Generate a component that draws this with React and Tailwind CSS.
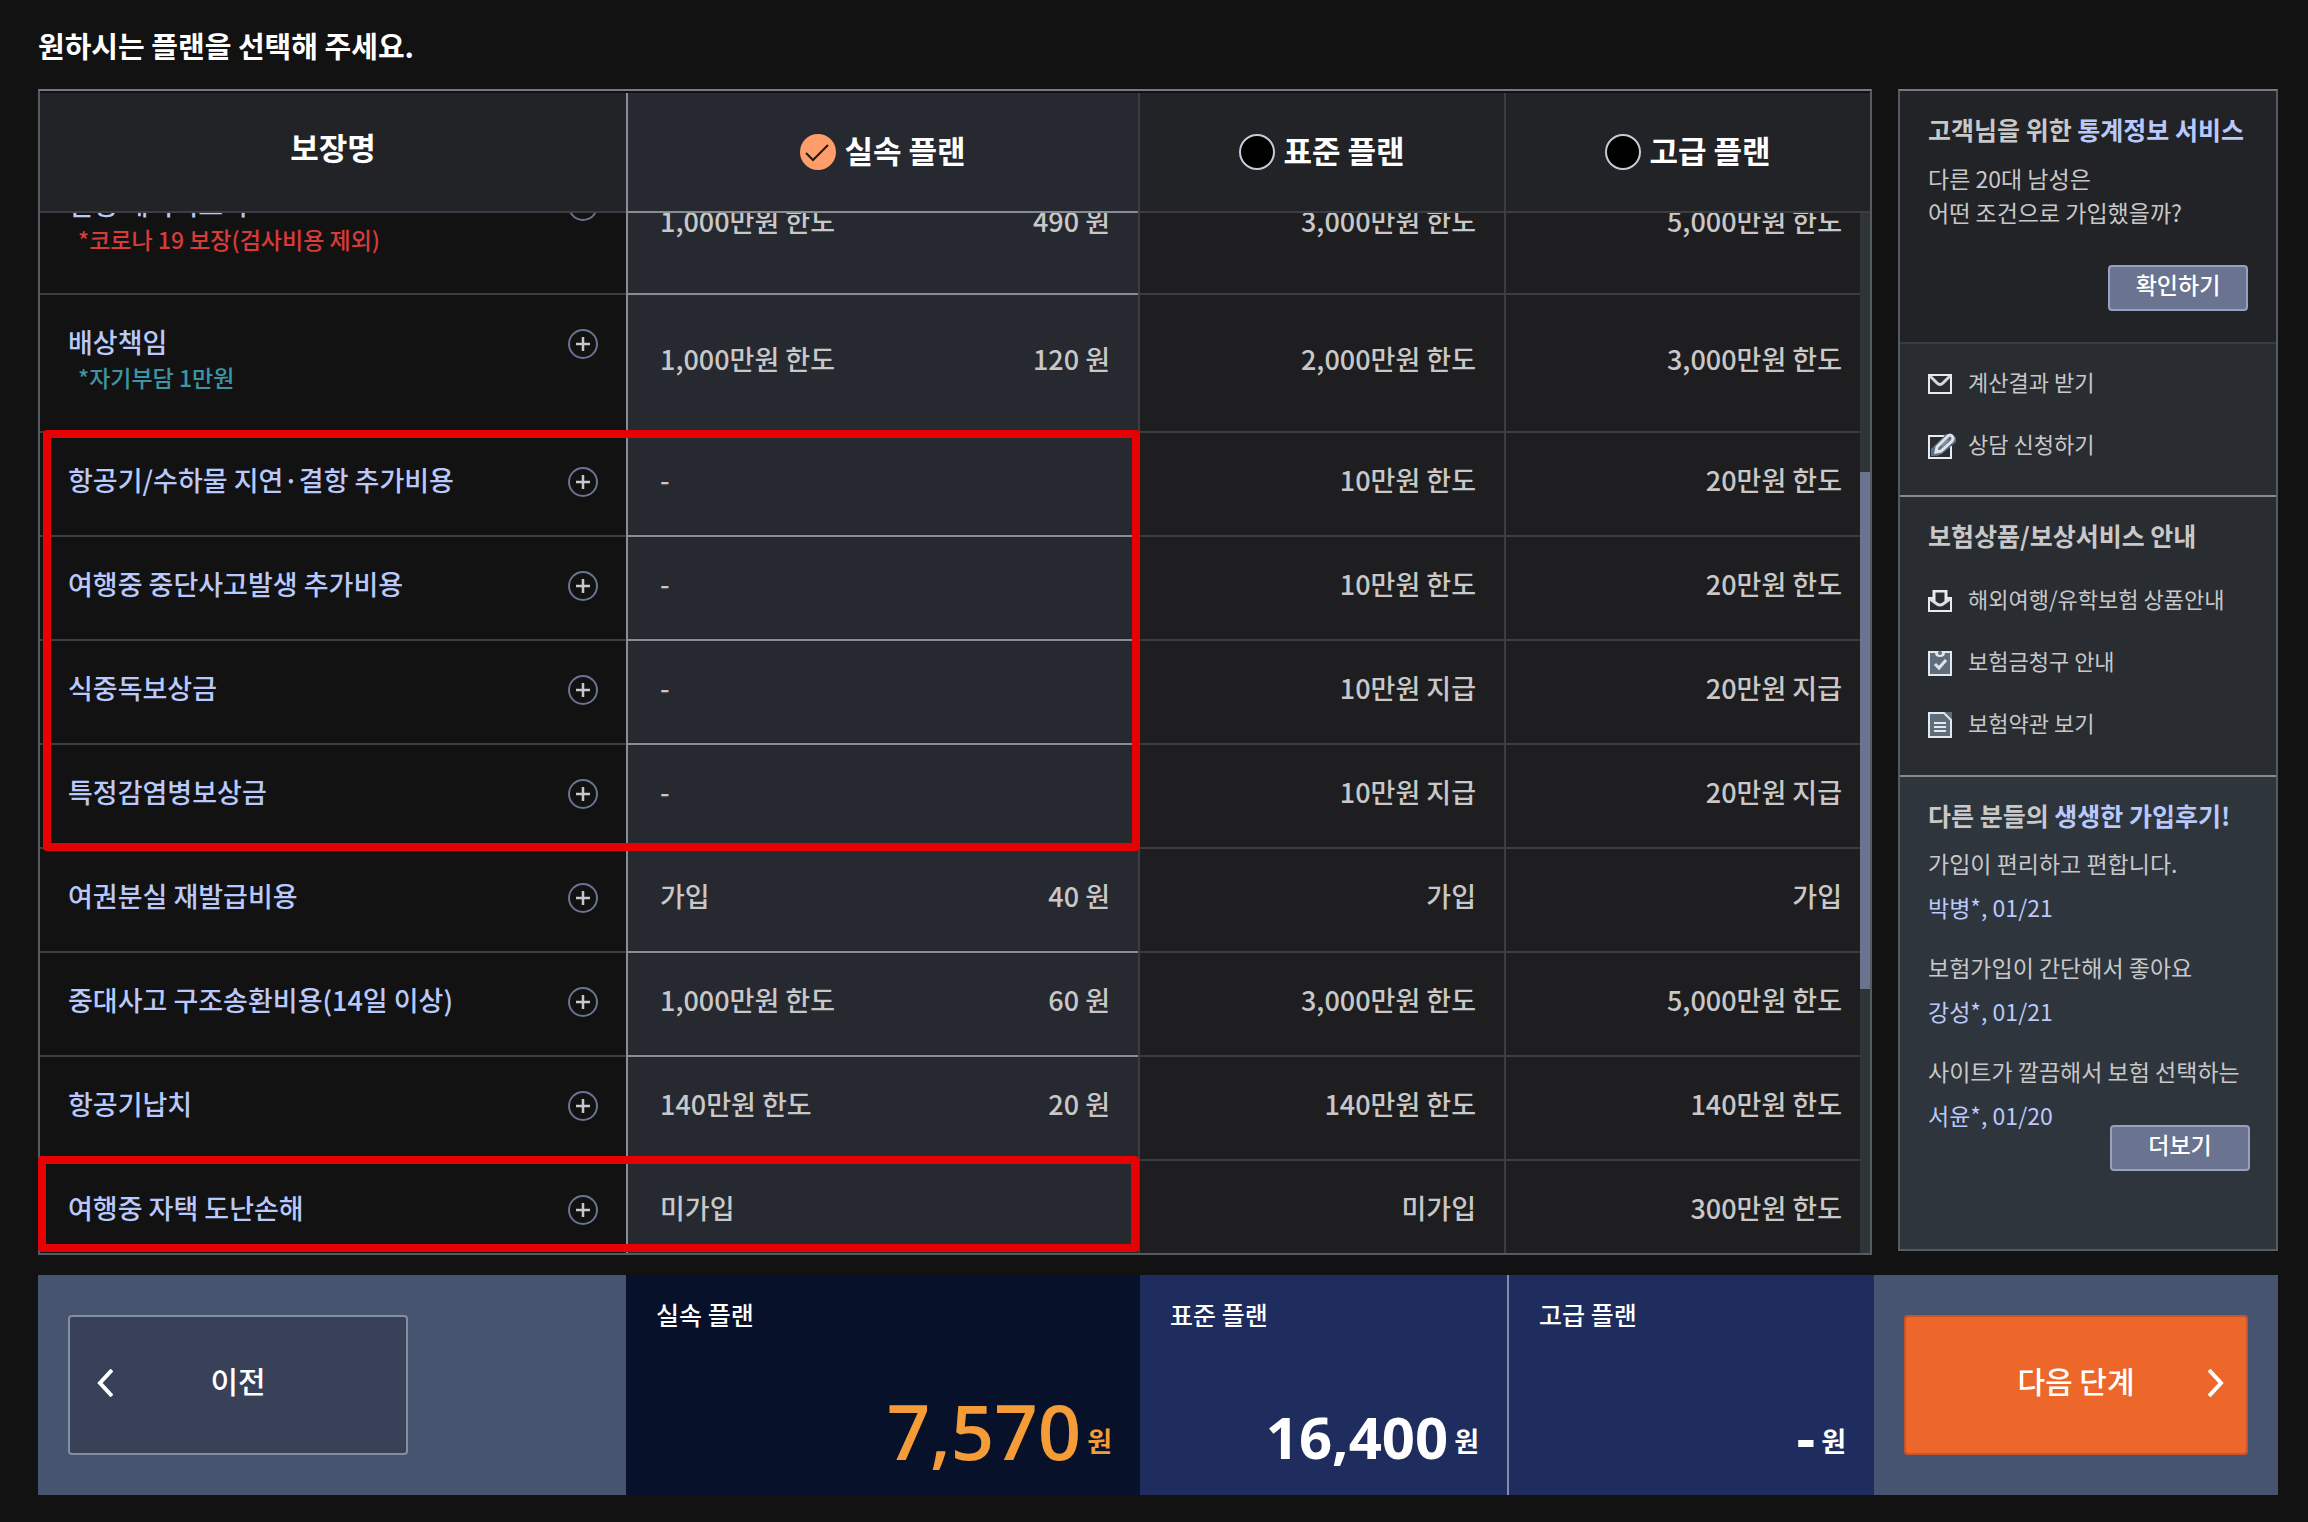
import React, { useLayoutEffect, useRef, useState } from "react";

const plans = [
  { id: "basic", name: "실속 플랜" },
  { id: "standard", name: "표준 플랜" },
  { id: "premium", name: "고급 플랜" },
];

const coverages = [
  {
    name: "질병 해외의료비",
    note: "*코로나 19 보장(검사비용 제외)",
    noteColor: "text-[#d93a3a]",
    basic: "1,000만원 한도",
    price: "490 원",
    standard: "3,000만원 한도",
    premium: "5,000만원 한도",
  },
  {
    name: "배상책임",
    note: "*자기부담 1만원",
    noteColor: "text-[#3f94a3]",
    basic: "1,000만원 한도",
    price: "120 원",
    standard: "2,000만원 한도",
    premium: "3,000만원 한도",
  },
  { name: "항공기/수하물 지연·결항 추가비용", basic: "-", standard: "10만원 한도", premium: "20만원 한도" },
  { name: "여행중 중단사고발생 추가비용", basic: "-", standard: "10만원 한도", premium: "20만원 한도" },
  { name: "식중독보상금", basic: "-", standard: "10만원 지급", premium: "20만원 지급" },
  { name: "특정감염병보상금", basic: "-", standard: "10만원 지급", premium: "20만원 지급" },
  { name: "여권분실 재발급비용", basic: "가입", price: "40 원", standard: "가입", premium: "가입" },
  {
    name: "중대사고 구조송환비용(14일 이상)",
    basic: "1,000만원 한도",
    price: "60 원",
    standard: "3,000만원 한도",
    premium: "5,000만원 한도",
  },
  { name: "항공기납치", basic: "140만원 한도", price: "20 원", standard: "140만원 한도", premium: "140만원 한도" },
  { name: "여행중 자택 도난손해", basic: "미가입", standard: "미가입", premium: "300만원 한도" },
];

const reviews = [
  { text: "가입이 편리하고 편합니다.", author: "박병*, 01/21" },
  { text: "보험가입이 간단해서 좋아요", author: "강성*, 01/21" },
  { text: "사이트가 깔끔해서 보험 선택하는", author: "서윤*, 01/20" },
];

const MailIcon = () => (
  <svg width="24" height="20" viewBox="0 0 24 20" fill="none">
    <path d="M1 1h22v18H1z" stroke="#e9ebf2" strokeWidth="2" />
    <path d="M2 2l7 7q3 3 6 0l7-7" stroke="#d5d8de" strokeWidth="3" />
  </svg>
);

const EditIcon = () => (
  <svg width="28" height="26" viewBox="0 0 28 26" fill="none">
    <path d="M17 3H1v22h22V13" stroke="#e9ebf2" strokeWidth="2" />
    <path d="M3 23V16L18 1h6l4 4v4L14 21l-5 2z" fill="#5f7080" />
    <path d="M9 14L20 3q2-2 4 0t0 5L13 18l-5 1z" stroke="#dfe3ea" strokeWidth="3" />
    <path d="M14 13l6-6" stroke="#8794a2" strokeWidth="2" />
  </svg>
);

const InboxIcon = () => (
  <svg width="24" height="22" viewBox="0 0 24 22" fill="none">
    <path d="M5 8H1v13h22V8h-4" stroke="#e9ebf2" strokeWidth="2" />
    <path d="M6 11V1h12v10" stroke="#e9ebf2" strokeWidth="3" />
    <path d="M2 9l7 5q3 2 6 0l7-5" stroke="#dcdfe6" strokeWidth="3" />
  </svg>
);

const ClaimIcon = () => (
  <svg width="24" height="26" viewBox="0 0 24 26" fill="none">
    <rect x="1" y="2" width="22" height="23" fill="#5f6d7a" stroke="#e3e7ee" strokeWidth="2" />
    <path d="M7 1v2q0 4 5 4t5-4V1z" fill="#dfe3ea" />
    <circle cx="12" cy="3" r="2" fill="#5f6d7a" />
    <path d="M7 14l4 4 7-8" stroke="#dfe3ea" strokeWidth="3" />
  </svg>
);

const DocIcon = () => (
  <svg width="24" height="26" viewBox="0 0 24 26" fill="none">
    <path d="M16 0h8v8z" fill="#5f6d7a" />
    <path d="M1 1h15l7 7v17H1z" fill="#5f6d7a" stroke="#e3e7ee" strokeWidth="2" />
    <path d="M6 11h12M6 15h12M6 19h12" stroke="#e3e7ee" strokeWidth="2" />
  </svg>
);

const PlusButton = ({ label }) => (
  <button type="button" aria-label={label} className="shrink-0">
    <svg width="30" height="30" viewBox="0 0 30 30" fill="none">
      <circle cx="15" cy="15" r="14" stroke="#6a7390" strokeWidth="2" />
      <path d="M8 15h14M15 8v14" stroke="#c8c8cc" strokeWidth="2.5" />
    </svg>
  </button>
);

const PlanRadio = ({ plan, checked, onChange }) => (
  <label className="flex items-center justify-center gap-2 cursor-pointer">
    <input
      type="radio"
      name="plan"
      value={plan.id}
      checked={checked}
      onChange={onChange}
      className="peer sr-only"
    />
    <svg width="36" height="36" viewBox="0 0 36 36" fill="none">
      {checked ? (
        <>
          <circle cx="18" cy="18" r="18" fill="#ff9d6b" />
          <path d="M6 19l7 7 15-15" stroke="#1c1a12" strokeWidth="2" />
        </>
      ) : (
        <circle cx="18" cy="18" r="17" fill="#000" stroke="#c3ccd6" strokeWidth="2" />
      )}
    </svg>
    <span className="pb-1">{plan.name}</span>
  </label>
);

const SideLink = ({ icon, children }) => (
  <li>
    <a href="#" className="flex items-center h-[62px] text-[22px] text-[#c8c8c8]">
      <span className="w-[40px] pt-1.5">{icon}</span>
      {children}
    </a>
  </li>
);

const PriceBox = ({ name, price, className, priceClass, priceColor }) => (
  <div className={`flex flex-col justify-between pl-[30px] pr-7 py-6 ${className}`}>
    <p className="text-[25px] leading-[30px] font-medium">{name}</p>
    <p className={`flex items-end justify-end gap-1.5 ${priceColor}`}>
      <span className={`font-['Open_Sans',sans-serif] ${priceClass}`}>{price}</span>
      <span className="mb-4 text-[27px] leading-[28px] font-bold">원</span>
    </p>
  </div>
);

const CoverageTable = () => {
  const [plan, setPlan] = useState("basic");
  const bodyRef = useRef(null);

  useLayoutEffect(() => {
    bodyRef.current.scrollTop = 56;
  }, []);

  return (
    <div className="relative flex-1 min-w-0 border-2 border-[#565b60] border-t-[#78788c] pt-0.5">
      <div ref={bodyRef} className="h-full overflow-y-auto [scrollbar-width:none]">
        <table className="w-full table-fixed border-separate border-spacing-0 text-[27px] leading-[38px] font-medium text-[#c8c8c8]">
          <thead className="text-[31px] leading-[44px] font-bold text-white">
            <tr>
              <th className="sticky top-0 w-[586px] h-[120px] bg-[#222327] border-b-2 border-[#3c3d40] pb-2.5">
                보장명
              </th>
              <th className="sticky top-0 w-[512px] bg-[#262930] border-b-2 border-l-2 border-[#8a8c93]">
                <PlanRadio plan={plans[0]} checked={plan === "basic"} onChange={() => setPlan("basic")} />
              </th>
              <th className="sticky top-0 bg-[#222327] border-b-2 border-l-2 border-[#3c3d40]">
                <PlanRadio plan={plans[1]} checked={plan === "standard"} onChange={() => setPlan("standard")} />
              </th>
              <th className="sticky top-0 bg-[#222327] border-b-2 border-l-2 border-[#3c3d40]">
                <PlanRadio plan={plans[2]} checked={plan === "premium"} onChange={() => setPlan("premium")} />
              </th>
            </tr>
          </thead>
          <tbody>
            {coverages.map((item) => (
              <tr key={item.name} className={item.note ? "h-[138px]" : "h-[104px]"}>
                <td className="border-b-2 border-[#3c3d40] px-7 pb-1">
                  <div className="flex items-center justify-between">
                    <a href="#" className="pb-1 text-[#b9c9fb]">{item.name}</a>
                    <PlusButton label={`${item.name} 상세보기`} />
                  </div>
                  {item.note && (
                    <p className={`-mt-1 mb-1.5 pl-2.5 text-[23px] leading-[32px] ${item.noteColor}`}>
                      {item.note}
                    </p>
                  )}
                </td>
                <td className="bg-[#262930] border-b-2 border-l-2 border-[#8a8c93] pl-8 pr-7 pb-2">
                  <div className="flex justify-between">
                    <span>{item.basic}</span>
                    <span>{item.price}</span>
                  </div>
                </td>
                <td className="bg-[#1e1e20] border-b-2 border-l-2 border-[#3c3d40] pr-7 pb-2 text-right">
                  {item.standard}
                </td>
                <td className="bg-[#1e1e20] border-b-2 border-l-2 border-[#3c3d40] pr-7 pb-2 text-right">
                  {item.premium}
                </td>
              </tr>
            ))}
          </tbody>
        </table>
      </div>

      {/* scroll bar */}
      <div className="absolute right-0 top-[122px] bottom-0 w-[10px] bg-[#2f3436]">
        <div className="mt-[259px] h-[517px] bg-[#6a7390]" />
      </div>

      {/* marked rows */}
      <div className="absolute left-[3px] top-[339px] w-[1097px] h-[421px] rounded-sm border-8 border-[#e60202] pointer-events-none" />
      <div className="absolute -left-0.5 top-[1065px] w-[1101px] h-[96px] rounded-sm border-8 border-[#e60202] pointer-events-none" />
    </div>
  );
};

const SideBar = () => (
  <aside className="flex flex-col w-[380px] mb-1 border-2 border-[#565b60] border-t-[#78788c] bg-[#292c31] text-[#c8c8c8]">
    <section className="h-[253px] px-7 pt-5 bg-[#222327] border-b-2 border-[#3a3d3f]">
      <h2 className="text-[25px] leading-[36px] font-bold">
        고객님을 위한 <span className="text-[#b9c9fb]">통계정보 서비스</span>
      </h2>
      <p className="mt-3.5 text-[23px] leading-[34px]">
        다른 20대 남성은
        <br />
        어떤 조건으로 가입했을까?
      </p>
      <div className="flex justify-end mt-9">
        <button
          type="button"
          className="w-[140px] h-[46px] pb-2 rounded-sm border-2 border-[#97a0bf] bg-[#6a7390] text-[23px] leading-[34px] font-medium text-white"
        >
          확인하기
        </button>
      </div>
    </section>

    <ul className="px-7 pt-1.5 h-[153px] border-b-2 border-[#8a8b8f]">
      <SideLink icon={<MailIcon />}>계산결과 받기</SideLink>
      <SideLink icon={<EditIcon />}>상담 신청하기</SideLink>
    </ul>

    <section className="h-[280px] px-7 pt-5 border-b-2 border-[#8a8b8f]">
      <h2 className="text-[25px] leading-[36px] font-bold">보험상품/보상서비스 안내</h2>
      <ul className="mt-3.5">
        <SideLink icon={<InboxIcon />}>해외여행/유학보험 상품안내</SideLink>
        <SideLink icon={<ClaimIcon />}>보험금청구 안내</SideLink>
        <SideLink icon={<DocIcon />}>보험약관 보기</SideLink>
      </ul>
    </section>

    <section className="relative flex-1 px-7 pt-5 bg-[#2f353d]">
      <h2 className="text-[25px] leading-[36px] font-bold">
        다른 분들의 <span className="text-[#b9c9fb]">생생한 가입후기!</span>
      </h2>
      <ul className="mt-2">
        {reviews.map((review) => (
          <li key={review.author} className="mb-4 text-[23px] leading-[44px] whitespace-nowrap">
            <p>{review.text}</p>
            <p className="text-[#b9c9fb]">{review.author}</p>
          </li>
        ))}
      </ul>
      <button
        type="button"
        className="absolute right-[26px] top-[348px] w-[140px] h-[46px] pb-2 rounded-sm border-2 border-[#97a0bf] bg-[#6a7390] text-[23px] leading-[34px] font-medium text-white"
      >
        더보기
      </button>
    </section>
  </aside>
);

const App = () => {
  return (
    <div className="flex flex-col h-screen min-h-[1522px] pl-[38px] pr-[30px] pb-[27px] bg-[#121212] font-['Noto_Sans_CJK_KR',sans-serif]">
      <h1 className="h-[89px] pt-6 text-[29px] leading-[42px] font-bold text-white">
        원하시는 플랜을 선택해 주세요.
      </h1>

      <div className="flex flex-1 min-h-0 gap-[26px]">
        <CoverageTable />
        <SideBar />
      </div>

      <div className="grid grid-cols-[588px_514px_1fr_1fr_404px] h-[220px] mt-5 bg-[#475470] text-white">
        <div className="px-[30px] py-10">
          <button
            type="button"
            className="relative w-[340px] h-[140px] pb-2.5 rounded-sm border-2 border-[#858e9f] bg-[#394159] text-[30px] font-medium"
          >
            <svg className="absolute left-[27px] top-[52px]" width="16" height="28" viewBox="0 0 16 28" fill="none">
              <path d="M15 1L3 14l12 13" stroke="#fff" strokeWidth="4" />
            </svg>
            이전
          </button>
        </div>
        <PriceBox
          name="실속 플랜"
          price="7,570"
          className="bg-[#07122a]"
          priceColor="text-[#f39c38]"
          priceClass="text-[76px] leading-[80px] font-semibold"
        />
        <PriceBox
          name="표준 플랜"
          price="16,400"
          className="bg-[#1e2d5e]"
          priceClass="text-[58px] leading-[68px] font-bold"
        />
        <PriceBox
          name="고급 플랜"
          price="-"
          className="bg-[#1e2d5e] border-l-2 border-[#858aa8]"
          priceClass="text-[58px] leading-[68px] font-bold"
        />
        <div className="px-[30px] py-10">
          <button
            type="button"
            className="relative w-full h-[140px] pb-2.5 rounded-sm border-2 border-[#c9532a] bg-[#ed672b] text-[30px] font-medium"
          >
            다음 단계
            <svg className="absolute right-[22px] top-[52px]" width="16" height="28" viewBox="0 0 16 28" fill="none">
              <path d="M1 1l12 13L1 27" stroke="#fff" strokeWidth="4" />
            </svg>
          </button>
        </div>
      </div>
    </div>
  );
};

export default App;
